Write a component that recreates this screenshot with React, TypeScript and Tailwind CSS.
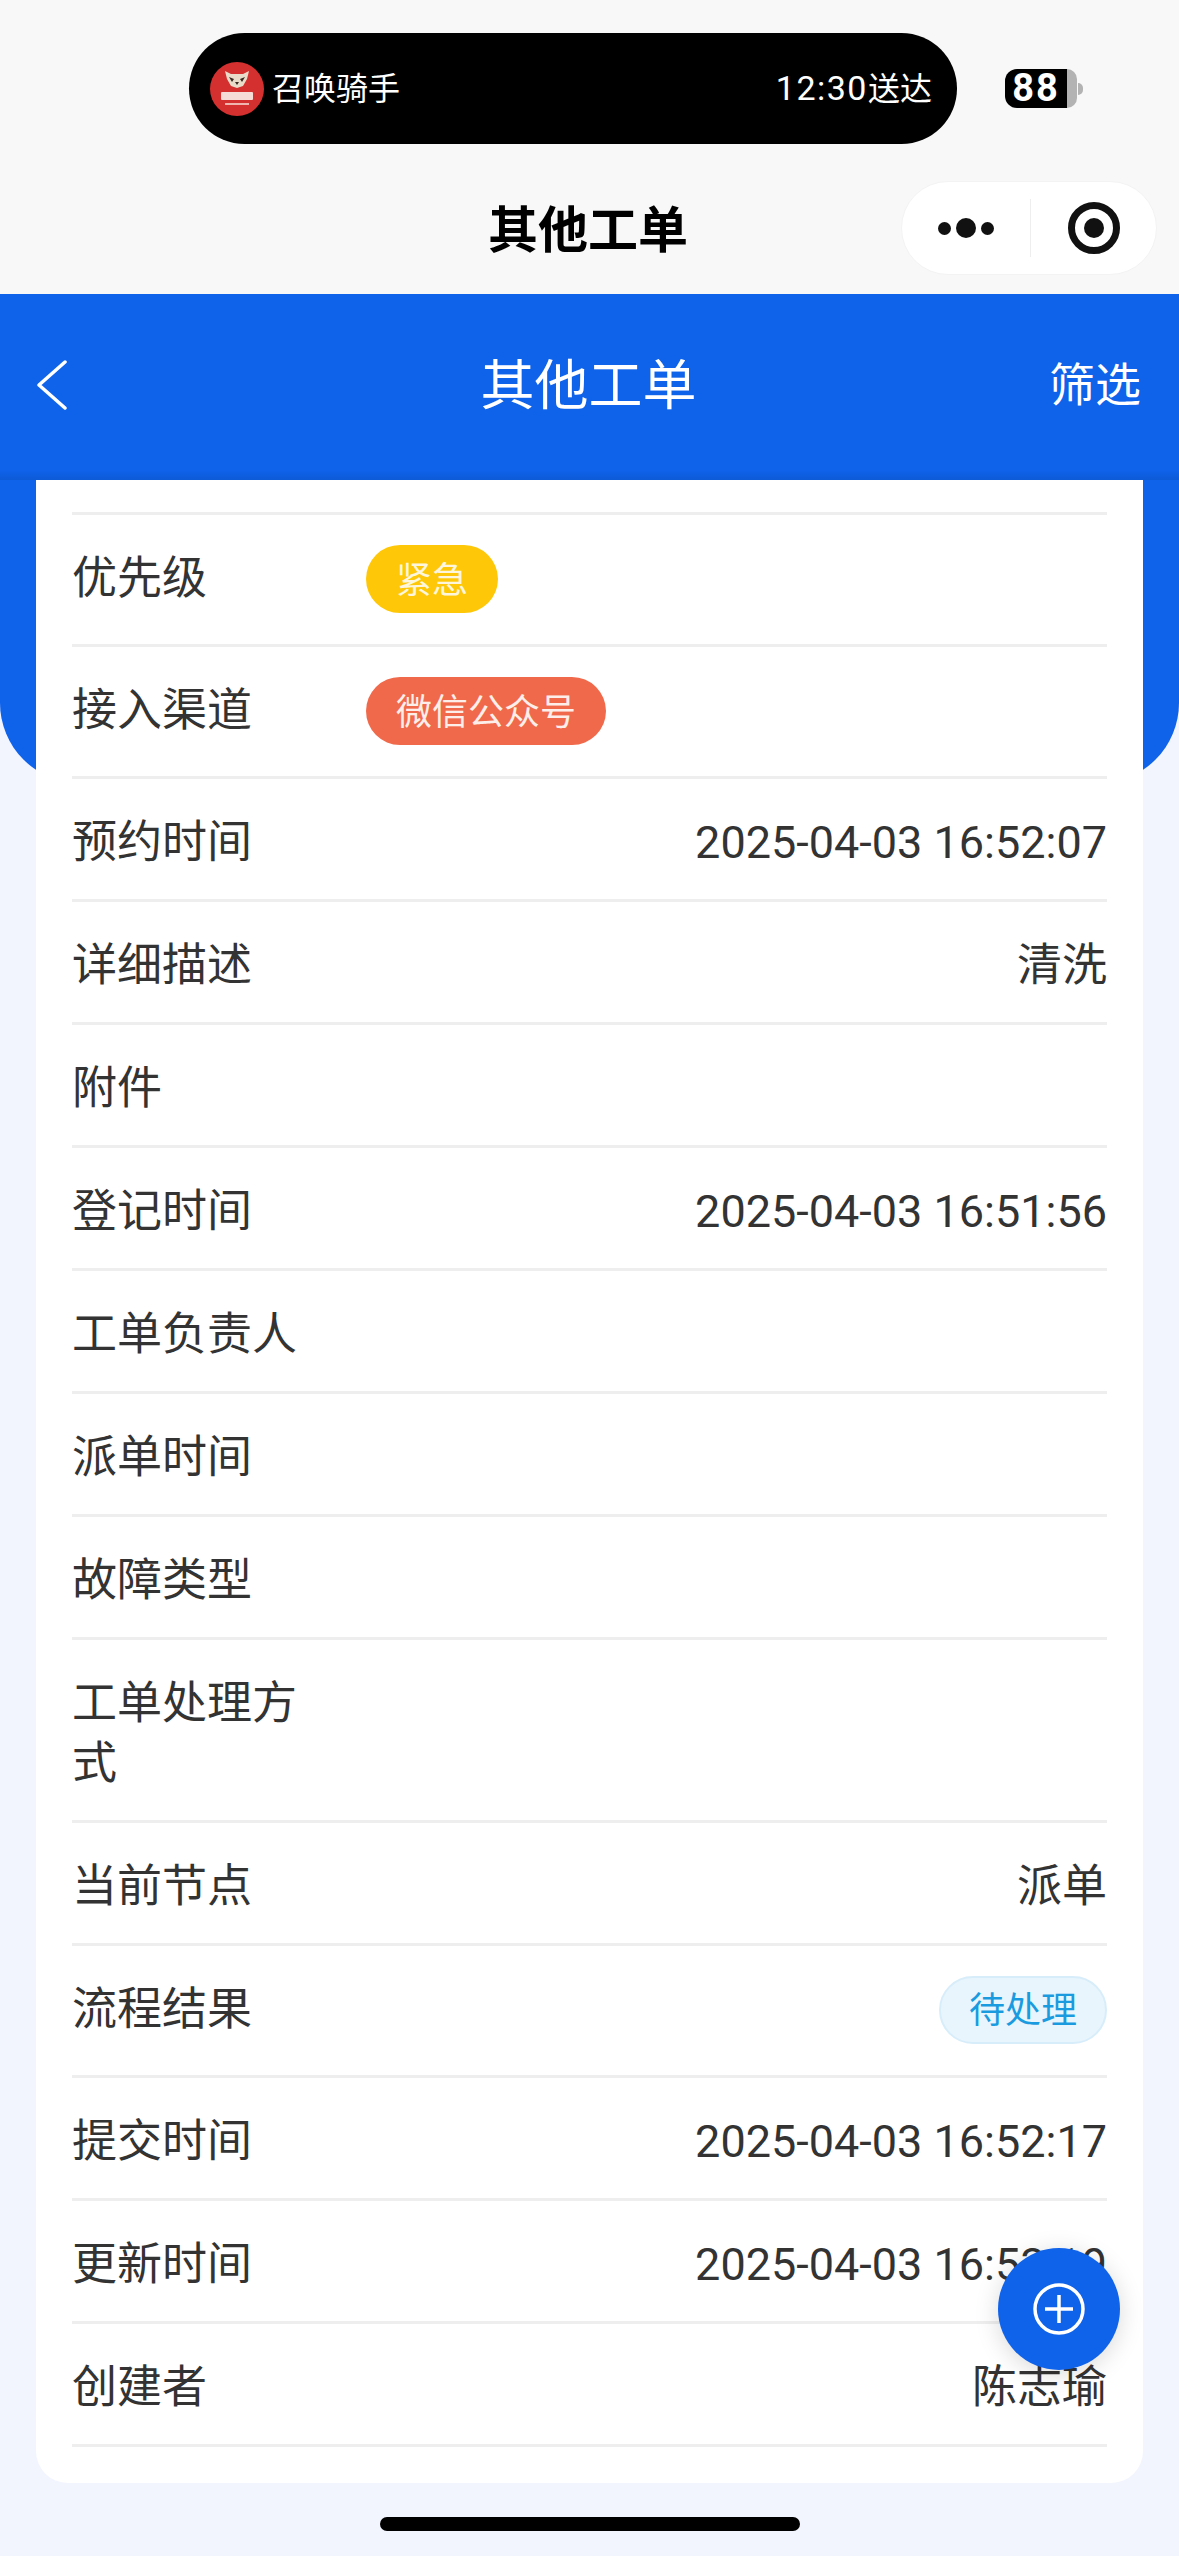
const rows: { label: string; value?: string; chip?: "urgent" | "channel" | "pending"; text?: string }[] = [
  { label: "优先级", chip: "urgent", text: "紧急" },
  { label: "接入渠道", chip: "channel", text: "微信公众号" },
  { label: "预约时间", value: "2025-04-03 16:52:07" },
  { label: "详细描述", value: "清洗" },
  { label: "附件" },
  { label: "登记时间", value: "2025-04-03 16:51:56" },
  { label: "工单负责人" },
  { label: "派单时间" },
  { label: "故障类型" },
  { label: "工单处理方式" },
  { label: "当前节点", value: "派单" },
  { label: "流程结果", chip: "pending", text: "待处理" },
  { label: "提交时间", value: "2025-04-03 16:52:17" },
  { label: "更新时间", value: "2025-04-03 16:53:19" },
  { label: "创建者", value: "陈志瑜" },
];

function Chip({ kind, text }: { kind: "urgent" | "channel" | "pending"; text: string }) {
  if (kind === "pending") {
    return (
      <div className="-mt-[4px] ml-auto flex h-[68px] items-center rounded-full border-2 border-[#d8edfa] bg-[#e8f5fd] px-[28px] pt-[2px] text-[36px] text-[#1a9be0]">
        {text}
      </div>
    );
  }
  return (
    <div
      className={
        kind === "urgent"
          ? "-mt-[4px] flex h-[68px] items-center rounded-full bg-[#fec707] px-[30px] pt-[3px] text-[36px] text-[#fdf6dc]"
          : "-mt-[4px] flex h-[68px] items-center rounded-full bg-[#f0694a] px-[30px] pt-[3px] text-[36px] text-[#fdeee9]"
      }
    >
      {text}
    </div>
  );
}

function Row({ row }: { row: (typeof rows)[number] }) {
  return (
    <div className={row.chip ? "flex items-start border-b-[3px] border-[#eeeeee] pb-[31px] pt-[34px]" : "flex items-start border-b-[3px] border-[#eeeeee] pb-[26px] pt-[34px]"}>
      <div className="w-[294px] shrink-0 pr-[60px] text-[45px] leading-[60px] text-[#333333]">{row.label}</div>
      {row.value && <div className="flex-1 text-right text-[45px] leading-[60px] text-[#333333]">{row.value}</div>}
      {row.chip && row.text && <Chip kind={row.chip} text={row.text} />}
    </div>
  );
}

function Avatar() {
  return (
    <svg width="54" height="54" viewBox="0 0 54 54">
      <circle cx="27" cy="27" r="27" fill="#d4302f" />
      <path d="M15 9l6 3h12l6-3-2 8-4 7-6 2-6-2-4-7z" fill="#e9dcc8" />
      <path d="M19 15l5 2-2 3zM35 15l-5 2 2 3zM25 20h4l-2 3z" fill="#3a2a22" />
      <rect x="11" y="30" width="32" height="8" rx="1" fill="#f6dcd6" />
      <rect x="15" y="41" width="24" height="2" fill="#efb5ae" />
    </svg>
  );
}

export default function App() {
  return (
    <div
      className="relative flex h-[2556px] w-[1179px] flex-col overflow-hidden bg-[#f2f5fe]"
      style={{ fontFamily: 'Roboto, "Noto Sans CJK SC", sans-serif' }}
    >
      {/* wechat mini program chrome */}
      <div className="h-[294px] shrink-0 bg-[#f8f8f8] pl-[189px] pt-[33px]">
        <div className="flex items-center">
          <div className="flex h-[111px] w-[768px] items-center justify-between rounded-[56px] bg-black pl-[21px] pr-[25px]">
            <div className="flex items-center gap-2 text-[32px] text-white">
              <Avatar />
              <span>召唤骑手</span>
            </div>
            <span className="text-[32px] text-white">
              <span className="text-[34px] tracking-[1.5px]">12:30</span>送达
            </span>
          </div>
          <div className="ml-12 flex items-center">
            <div className="flex h-[39px] w-[62px] items-center justify-center rounded-l-[12px] bg-black text-[38px] font-bold tracking-[2px] text-white">88</div>
            <div className="h-[39px] w-[10px] rounded-r-[10px] bg-[#b3b3b3]" />
            <div className="ml-px h-[12px] w-[5px] rounded-r-full bg-[#b3b3b3]" />
          </div>
        </div>
        <div className="relative mt-[37px] flex items-center">
          <div className="ml-[299px] w-[200px] pt-[3px] text-center text-[50px] font-bold leading-[94px] text-black">其他工单</div>
          <div className="absolute left-[712px] top-0 flex h-[94px] w-[256px] items-center rounded-[47px] border border-[#f3f3f3] bg-white">
            <div className="flex w-[128px] items-center justify-center gap-[5px]">
              <span className="h-[13px] w-[13px] rounded-full bg-[#111111]" />
              <span className="h-[20px] w-[20px] rounded-full bg-[#111111]" />
              <span className="h-[13px] w-[13px] rounded-full bg-[#111111]" />
            </div>
            <div className="h-[58px] w-px bg-[#eeeeee]" />
            <div className="flex flex-1 items-center justify-center">
              <div className="flex h-[52px] w-[52px] items-center justify-center rounded-full border-[7px] border-[#111111]">
                <span className="h-[20px] w-[20px] rounded-full bg-[#111111]" />
              </div>
            </div>
          </div>
        </div>
      </div>

      {/* blue nav */}
      <div className="h-[489px] shrink-0 rounded-b-[80px] bg-[#0f62ea]">
        <div className="flex h-[176px] items-center pl-[36px] pr-[38px] pt-[6px]">
          <div className="flex-1">
            <svg width="32" height="50" viewBox="0 0 32 50" fill="none" stroke="white" strokeWidth="3.5" strokeLinecap="round" strokeLinejoin="round">
              <path d="M29 2L3 25l26 23" />
            </svg>
          </div>
          <div className="pt-[3px] text-[54px] text-white">其他工单</div>
          <div className="flex-1 text-right text-[46px] text-white">筛选</div>
        </div>
        <div className="h-[10px] bg-gradient-to-b from-transparent to-black/[0.08]" />
      </div>

      {/* detail card */}
      <div className="relative mx-[36px] -mt-[303px] rounded-b-[32px] bg-white px-[36px] pb-[36px] pt-[32px]">
        <div className="border-t-[3px] border-[#eeeeee]">
          {rows.map((row) => (
            <Row key={row.label} row={row} />
          ))}
        </div>
      </div>

      {/* floating add button */}
      <div className="absolute left-[998px] top-[2248px] flex h-[122px] w-[122px] items-center justify-center rounded-full bg-[#0f62ea] shadow-[0_4px_24px_rgba(0,0,0,0.15)]">
        <svg width="54" height="54" viewBox="0 0 54 54" fill="none" stroke="white" strokeWidth="3.5">
          <circle cx="27" cy="27" r="24" />
          <path d="M27 13v28M13 27h28" />
        </svg>
      </div>

      {/* home indicator */}
      <div className="absolute bottom-[25px] left-[380px] h-[14px] w-[420px] rounded-full bg-black" />
    </div>
  );
}
